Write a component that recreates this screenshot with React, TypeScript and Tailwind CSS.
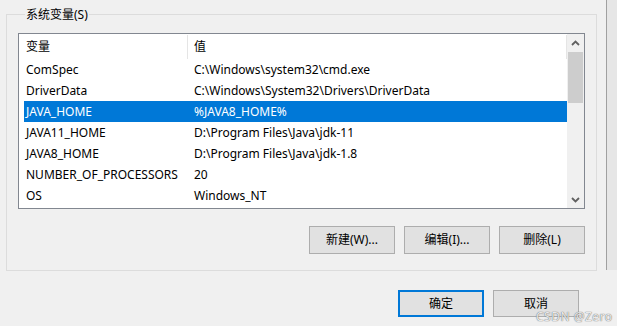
import React from "react";

const rows: [string, string][] = [
  ["ComSpec", "C:\\Windows\\system32\\cmd.exe"],
  ["DriverData", "C:\\Windows\\System32\\Drivers\\DriverData"],
  ["JAVA_HOME", "%JAVA8_HOME%"],
  ["JAVA11_HOME", "D:\\Program Files\\Java\\jdk-11"],
  ["JAVA8_HOME", "D:\\Program Files\\Java\\jdk-1.8"],
  ["NUMBER_OF_PROCESSORS", "20"],
  ["OS", "Windows_NT"],
];

const Chevron = ({ down }: { down?: boolean }) => (
  <svg width="9" height="6" viewBox="0 0 9 6" className={down ? "rotate-180" : ""}>
    <path d="M1 5 L4.5 1.5 L8 5" fill="none" stroke="#606060" strokeWidth="1.8" />
  </svg>
);

const Btn = ({ label, primary, tall }: { label: string; primary?: boolean; tall?: boolean }) => (
  <button
    className={
      "w-[86px] flex items-center justify-center bg-[#e1e1e1] text-[12px] text-black " +
      (tall ? "h-[28px] " : "h-[27px] ") +
      (primary ? "border-2 border-[#0078d7]" : "border border-[#adadad]")
    }
  >
    {label}
  </button>
);

export default function App() {
  return (
    <div className="w-[617px] h-[326px] bg-[#f0f0f0] overflow-hidden flex relative font-['Noto_Sans','Noto_Sans_CJK_SC',sans-serif] text-[12px] text-black">
      <div className="w-[597px] pl-[6px] pt-[6px] flex flex-col">
        <fieldset className="border border-[#dcdcdc] h-[265px] px-[11px]">
          <legend className="ml-[7px] px-[1px] leading-[17px]">系统变量(S)</legend>
          <div className="mt-[10px] h-[176px] border border-[#828790] bg-white flex">
            <div className="flex-1 flex flex-col">
              <div className="h-[25px] flex items-center">
                <div className="w-[168px] pl-[7px] leading-none">变量</div>
                <div className="w-px h-[24px] bg-[#e5e5e5] self-start mt-[1px]" />
                <div className="flex-1 pl-[6px] leading-none">值</div>
                <div className="w-px h-[24px] bg-[#e5e5e5] self-start mt-[1px]" />
              </div>
              {rows.map(([k, v], i) => (
                <div
                  key={k}
                  className={
                    "ml-[5px] h-[21px] grid grid-cols-[168px_1fr] items-center pl-[2px] leading-none " +
                    (i === 2 ? "bg-[#0078d7] text-white" : "")
                  }
                >
                  <span className="whitespace-nowrap">{k}</span>
                  <span className="whitespace-nowrap">{v}</span>
                </div>
              ))}
            </div>
            <div className="w-[17px] bg-[#f0f0f0] flex flex-col items-center">
              <div className="h-[18px] flex items-center justify-center">
                <Chevron />
              </div>
              <div className="w-[15px] h-[51px] bg-[#cdcdcd]" />
              <div className="flex-1" />
              <div className="h-[17px] flex items-center justify-center">
                <Chevron down />
              </div>
            </div>
          </div>
          <div className="mt-[17px] flex justify-end gap-[9px]">
            <Btn label="新建(W)..." tall />
            <Btn label="编辑(I)..." tall />
            <Btn label="删除(L)" tall />
          </div>
        </fieldset>
        <div className="mt-[19px] flex justify-end gap-[9px] pr-[18px]">
          <Btn label="确定" primary />
          <Btn label="取消" />
        </div>
      </div>
      <div className="ml-[9px] w-px h-[270px] bg-[#a0a0a0]" />
      <div className="flex-1 h-[270px] bg-[#e6e6e6]" />
      <span className="absolute left-[536px] top-[308px] text-[12px] text-[rgba(255,255,255,0.85)] [text-shadow:0_0_1px_#777,0_0_1px_#777] tracking-[0.5px]">
        CSDN @Zero
      </span>
    </div>
  );
}
